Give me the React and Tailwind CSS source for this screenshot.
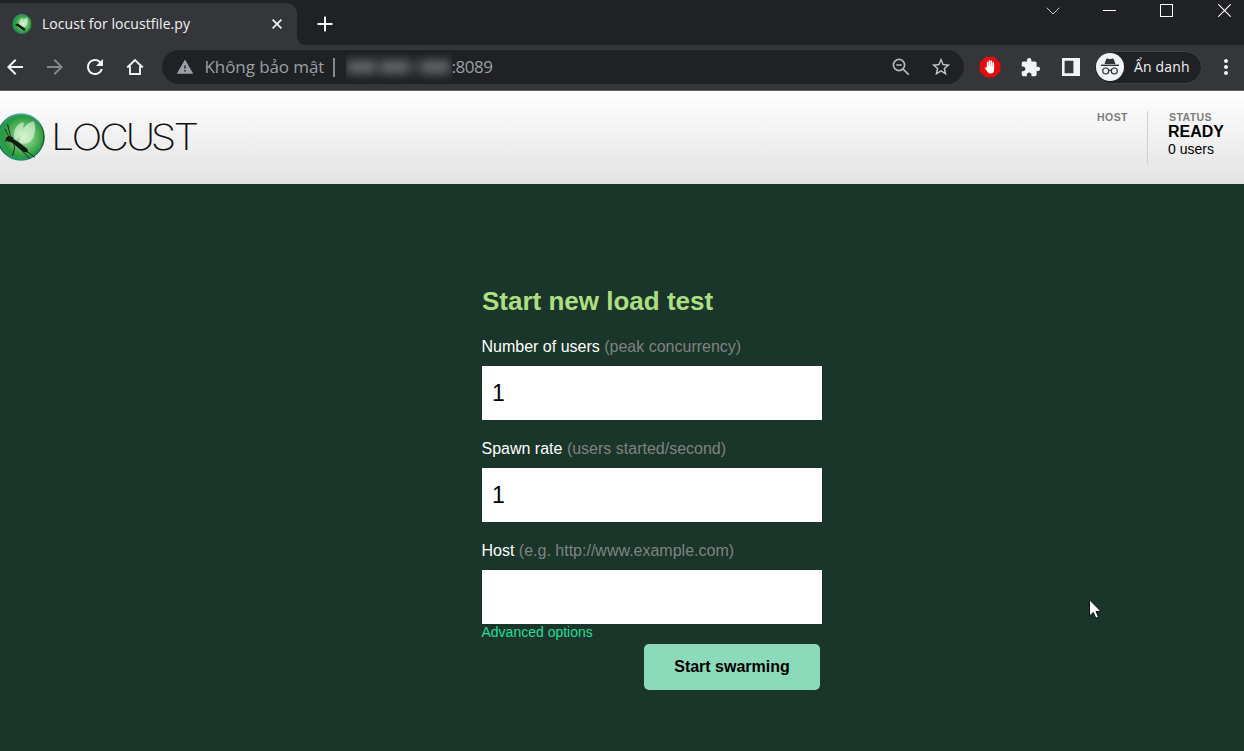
import React from "react";
import {
  MdArrowBack,
  MdArrowForward,
  MdRefresh,
  MdWarning,
  MdStarBorder,
  MdExtension,
  MdMoreVert,
} from "react-icons/md";

function LocustBall({ className, id, detailed }) {
  return (
    <svg viewBox="0 0 48 48" className={className}>
      <defs>
        <radialGradient id={id} cx="0.56" cy="0.5" r="0.56">
          <stop offset="0" stopColor="#b5e6b4" />
          <stop offset="0.4" stopColor="#6cc072" />
          <stop offset="0.78" stopColor="#2a9a3c" />
          <stop offset="0.94" stopColor="#2b9a57" />
          <stop offset="1" stopColor="#3fb5a5" />
        </radialGradient>
        <linearGradient id={id + "-rim"} x1="0" y1="0" x2="0" y2="1">
          <stop offset="0" stopColor="#4fa5a8" />
          <stop offset="0.5" stopColor="#07521b" />
          <stop offset="1" stopColor="#1d8d80" />
        </linearGradient>
      </defs>
      <circle cx="24" cy="24" r="23" fill={`url(#${id})`} stroke={`url(#${id}-rim)`} strokeWidth="1.4" />
      <path d="M17.5 26C15.5 18 20 10 26.5 9C27.5 14 24 22 20 27Z" fill="#e6fae0" opacity="0.6" />
      <path d="M22 29C22 19 29 9 37 8.5C39.5 15 38 24 33.5 28.5C30 31.5 25 31.5 22 29Z" fill="#ecfce6" opacity="0.6" />
      <path
        d="M8.5 27.5L9 24.5L12 22.8L15.5 24L17 26.5L22 29.5L30.5 36L31 39.5L27 39L22.5 36L18 32L14.5 29.5L11.5 28.5Z"
        fill="#101b12"
      />
      {detailed ? (
        <g fill="none" stroke="#142517" strokeWidth="0.9">
          <path d="M12 24L8 16M13.5 23.5L10.5 11M17 31L17.5 35L15.5 43M23 35.5L33 46M29 37.5L38 44.5M10 27L8 29" />
        </g>
      ) : (
        <path d="M14 26L31 38" stroke="#101b12" strokeWidth="5" />
      )}
    </svg>
  );
}

function TabStrip() {
  return (
    <div className="flex h-[45px] items-start bg-[#202124]">
      <div className="mt-[3px] flex h-[42px] w-[297px] items-center rounded-tr-[10px] bg-[#35363a] pl-3">
        <LocustBall id="tab-ball" className="h-5 w-5 shrink-0" />
        <span className="mb-[2px] ml-[10px] w-[230px] whitespace-nowrap font-['Open_Sans',sans-serif] text-[14px] tracking-[0.06px] text-[#f1f3f4]">
          Locust for locustfile.py
        </span>
        <svg viewBox="0 0 10 10" className="h-[10px] w-[10px] shrink-0" fill="none" stroke="#f1f3f4" strokeWidth="1.7">
          <path d="M0.6 0.6L9.4 9.4M9.4 0.6L0.6 9.4" />
        </svg>
      </div>
      <svg viewBox="0 0 10 10" className="h-[10px] w-[10px] self-end" fill="#35363a">
        <path d="M0 0Q0 10 10 10H0Z" />
      </svg>
      <svg viewBox="0 0 16 16" className="ml-[9.5px] mt-4 h-4 w-4" fill="none" stroke="#f1f3f4" strokeWidth="2">
        <path d="M8 0.5V15.5M0.5 8H15.5" />
      </svg>
      <svg viewBox="0 0 14 8" className="ml-auto mt-[7px] h-2 w-[14px]" fill="none" stroke="#c6c7c9" strokeWidth="1">
        <path d="M0.7 0.7L7 7L13.3 0.7" />
      </svg>
      <div className="ml-[43px] mt-[10px] h-px w-[13px] bg-white" />
      <div className="ml-[44px] mt-1 h-[13px] w-[13px] border border-white" />
      <svg viewBox="0 0 13 13" className="ml-[45px] mr-[13px] mt-1 h-[13px] w-[13px]" fill="none" stroke="#ffffff" strokeWidth="1.1">
        <path d="M0.3 0.3L12.7 12.7M12.7 0.3L0.3 12.7" />
      </svg>
    </div>
  );
}

function AddressBar() {
  return (
    <div className="flex h-[34px] w-[802px] items-center rounded-full bg-[#202124] pl-[14px] pr-[12px] font-['Open_Sans',sans-serif] text-[17px] text-[#9aa0a6]">
      <MdWarning className="h-[18px] w-[18px] shrink-0" />
      <span className="ml-[10.5px] w-[120.5px] whitespace-nowrap tracking-[-0.08px]">Không bảo mật</span>
      <div className="ml-[8px] h-[19px] w-[1.5px] bg-[#85898e]" />
      <div className="ml-[11px] h-[29px] w-[106px] overflow-hidden">
        <div className="flex h-full items-center justify-around opacity-60 blur-[5px]">
          <div className="h-[14px] w-[29px] bg-[#8b8e92]" />
          <div className="h-[14px] w-[29px] bg-[#8b8e92]" />
          <div className="h-[12px] w-[4px] bg-[#8b8e92]" />
          <div className="h-[14px] w-[29px] bg-[#8b8e92]" />
        </div>
      </div>
      <span className="whitespace-nowrap tracking-[-0.5px]">:8089</span>
      <svg viewBox="0 0 18 18" className="ml-auto h-[18px] w-[18px]" fill="none" stroke="#b4b7bb" strokeWidth="1.7">
        <circle cx="7" cy="7" r="5.6" />
        <path d="M4.2 7H9.8M11.1 11.1L16.7 16.7" />
      </svg>
      <MdStarBorder className="ml-5 h-[22px] w-[22px] text-[#c1c4c8]" />
    </div>
  );
}

function Incognito() {
  return (
    <div className="ml-[14px] flex h-[33px] w-[108px] items-center rounded-full border border-[#424347] bg-[#202124] pl-px">
      <svg viewBox="0 0 28 28" className="h-7 w-7 shrink-0">
        <circle cx="14" cy="14" r="14" fill="#f1f3f4" />
        <path d="M8.5 11L10.2 6.2Q10.6 5.2 11.6 5.6L14 6.2L16.4 5.6Q17.4 5.2 17.8 6.2L19.5 11Z" fill="#303134" />
        <path d="M5 12.3H23" stroke="#303134" strokeWidth="1.4" />
        <g fill="none" stroke="#303134" strokeWidth="1.2">
          <circle cx="9.7" cy="18" r="3" />
          <circle cx="18.3" cy="18" r="3" />
          <path d="M12.7 17.6Q14 16.6 15.3 17.6" />
        </g>
      </svg>
      <span className="mb-px ml-[10px] whitespace-nowrap font-['Open_Sans',sans-serif] text-[14px] tracking-[0.15px] text-[#f1f3f4]">
        Ẩn danh
      </span>
    </div>
  );
}

function Toolbar() {
  return (
    <div className="flex h-[46px] items-center border-b border-[#606165] bg-[#35363a] pb-px pl-[2.5px] text-[#f1f3f4]">
      <MdArrowBack className="h-6 w-6" />
      <MdArrowForward className="ml-4 h-6 w-6 text-[#85868a]" />
      <MdRefresh className="ml-4 h-6 w-6" />
      <svg viewBox="0 0 18 18" className="ml-[19px] h-[18px] w-[18px]" fill="none" stroke="#f1f3f4" strokeWidth="1.9">
        <path d="M1.2 9.5L9 2L16.8 9.5M4 8V16H14V8" />
      </svg>
      <div className="ml-[18.5px]">
        <AddressBar />
      </div>
      <svg viewBox="0 0 22 22" className="ml-[15px] h-[22px] w-[22px]">
        <path d="M6.7 0.7H15.3L21.3 6.7V15.3L15.3 21.3H6.7L0.7 15.3V6.7Z" fill="#e60b0b" />
        <path
          d="M8.6 12.5V6.6M10.5 11V4.9M12.4 11V5.2M14.3 12V6.8"
          stroke="#fff"
          strokeWidth="1.6"
          strokeLinecap="round"
        />
        <path d="M7.8 10H15.1V13.5Q15.1 17.6 11.8 17.6Q9.6 17.6 8.2 15.4L5.6 12Q6.4 11 7.8 12.2Z" fill="#fff" />
      </svg>
      <MdExtension className="ml-[19px] h-[21px] w-[21px]" />
      <svg viewBox="0 0 18 18" className="ml-[21px] h-[18px] w-[18px]">
        <path d="M0 0H18V18H0ZM2.6 2.8V15.2H11.4V2.8Z" fill="#f1f3f4" fillRule="evenodd" />
      </svg>
      <Incognito />
      <MdMoreVert className="ml-3 h-6 w-6" />
    </div>
  );
}

function PageHeader() {
  return (
    <header className="flex h-[93px] items-start bg-linear-to-b from-white to-[#e3e3e3] pt-5">
      <div className="flex items-start">
        <LocustBall id="logo-ball" detailed className="-ml-[3px] mt-[2px] h-12 w-12" />
        <svg
          viewBox="0 0 160 50"
          className="ml-[5px] h-[50px] w-[160px]"
          fill="#111111"
          fontFamily="Inter, sans-serif"
          fontWeight="200"
          fontSize="36"
        >
          <text y="39" transform="scale(1.14 1)" x="0.9 18.8 43.2 66.2 88.3 108.4">
            LOCUST
          </text>
        </svg>
      </div>
      <div className="ml-auto flex font-['Liberation_Sans',Arial,sans-serif]">
        <div className="h-[53px] w-[52px] border-r border-[#d0d0d0] pt-[1px]">
          <div className="pl-px text-[10.5px] font-bold leading-[11px] tracking-[0.45px] text-[#7d7d7d]">HOST</div>
        </div>
        <div className="ml-5 w-[76px] pt-[1px] text-black">
          <div className="pl-px text-[10.5px] font-bold leading-[11px] tracking-[0.4px] text-[#7d7d7d]">STATUS</div>
          <div className="mt-px text-[16px] font-bold leading-[16px]">READY</div>
          <div className="mt-px text-[14px] leading-[16px]">0 users</div>
        </div>
      </div>
    </header>
  );
}

function Field({ label, hint, value }) {
  return (
    <label className="mb-5 block">
      <span className="-ml-[0.5px] block whitespace-nowrap text-[16px] leading-[18px] text-white">
        {label} <span className="text-[#808381]">{hint}</span>
      </span>
      <input
        type="text"
        defaultValue={value}
        className="mt-[10px] block h-[54px] w-[340px] bg-white px-[10px] text-[23px] text-black outline-none"
      />
    </label>
  );
}

function StartForm() {
  return (
    <main className="relative grow bg-[#1a352a] pl-[482px] pt-[101px] font-['Liberation_Sans',Arial,sans-serif]">
      <h2 className="mb-[21px] whitespace-nowrap text-[26px] font-bold leading-[32px] text-[#addf82]">
        Start new load test
      </h2>
      <Field label="Number of users" hint="(peak concurrency)" value="1" />
      <Field label="Spawn rate" hint="(users started/second)" value="1" />
      <Field label="Host" hint="(e.g. http://www.example.com)" value="" />
      <a className="-ml-[0.5px] -mt-5 block h-5 text-[14px] leading-[16px] text-[#22dd94]">Advanced options</a>
      <button className="ml-[162px] h-[46px] w-[176px] rounded-[5px] bg-[#8bdab9] text-[16px] font-bold text-black">
        Start swarming
      </button>
      <svg viewBox="0 0 12 20" className="absolute left-[1089px] top-[415px] h-5 w-3">
        <path
          d="M0.5 0.8V17L4.3 13.4L6.8 19.2L9.5 18L7 12.4H12Z"
          fill="#ffffff"
          stroke="#0b1210"
          strokeWidth="1"
        />
      </svg>
    </main>
  );
}

export default function App() {
  return (
    <div className="flex h-[751px] w-[1244px] flex-col overflow-hidden">
      <TabStrip />
      <Toolbar />
      <PageHeader />
      <StartForm />
    </div>
  );
}
